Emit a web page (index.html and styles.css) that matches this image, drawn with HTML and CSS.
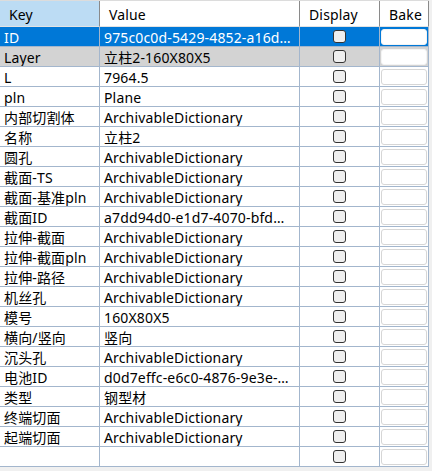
FILE: index.html
```html
<!DOCTYPE html>
<html>
<head>
<meta charset="utf-8">
<link rel="stylesheet" href="styles.css">
</head>
<body>
<div class="grid">
  <div class="row head">
    <div class="cell hkey">Key</div>
    <div class="cell">Value</div>
    <div class="cell">Display</div>
    <div class="cell">Bake</div>
  </div>
  <div class="row sel"><div class="cell">ID</div><div class="cell">975c0c0d-5429-4852-a16d…</div><div class="cell chk"><span class="box"></span></div><div class="cell bake"><span class="tb"></span></div></div>
  <div class="row alt"><div class="cell">Layer</div><div class="cell">立柱2-160X80X5</div><div class="cell chk"><span class="box"></span></div><div class="cell bake"><span class="tb"></span></div></div>
  <div class="row"><div class="cell">L</div><div class="cell">7964.5</div><div class="cell chk"><span class="box"></span></div><div class="cell bake"><span class="tb"></span></div></div>
  <div class="row"><div class="cell">pln</div><div class="cell">Plane</div><div class="cell chk"><span class="box"></span></div><div class="cell bake"><span class="tb"></span></div></div>
  <div class="row"><div class="cell">内部切割体</div><div class="cell">ArchivableDictionary</div><div class="cell chk"><span class="box"></span></div><div class="cell bake"><span class="tb"></span></div></div>
  <div class="row"><div class="cell">名称</div><div class="cell">立柱2</div><div class="cell chk"><span class="box"></span></div><div class="cell bake"><span class="tb"></span></div></div>
  <div class="row"><div class="cell">圆孔</div><div class="cell">ArchivableDictionary</div><div class="cell chk"><span class="box"></span></div><div class="cell bake"><span class="tb"></span></div></div>
  <div class="row"><div class="cell">截面-TS</div><div class="cell">ArchivableDictionary</div><div class="cell chk"><span class="box"></span></div><div class="cell bake"><span class="tb"></span></div></div>
  <div class="row"><div class="cell">截面-基准pln</div><div class="cell">ArchivableDictionary</div><div class="cell chk"><span class="box"></span></div><div class="cell bake"><span class="tb"></span></div></div>
  <div class="row"><div class="cell">截面ID</div><div class="cell">a7dd94d0-e1d7-4070-bfd…</div><div class="cell chk"><span class="box"></span></div><div class="cell bake"><span class="tb"></span></div></div>
  <div class="row"><div class="cell">拉伸-截面</div><div class="cell">ArchivableDictionary</div><div class="cell chk"><span class="box"></span></div><div class="cell bake"><span class="tb"></span></div></div>
  <div class="row"><div class="cell">拉伸-截面pln</div><div class="cell">ArchivableDictionary</div><div class="cell chk"><span class="box"></span></div><div class="cell bake"><span class="tb"></span></div></div>
  <div class="row"><div class="cell">拉伸-路径</div><div class="cell">ArchivableDictionary</div><div class="cell chk"><span class="box"></span></div><div class="cell bake"><span class="tb"></span></div></div>
  <div class="row"><div class="cell">机丝孔</div><div class="cell">ArchivableDictionary</div><div class="cell chk"><span class="box"></span></div><div class="cell bake"><span class="tb"></span></div></div>
  <div class="row"><div class="cell">模号</div><div class="cell">160X80X5</div><div class="cell chk"><span class="box"></span></div><div class="cell bake"><span class="tb"></span></div></div>
  <div class="row"><div class="cell">横向/竖向</div><div class="cell">竖向</div><div class="cell chk"><span class="box"></span></div><div class="cell bake"><span class="tb"></span></div></div>
  <div class="row"><div class="cell">沉头孔</div><div class="cell">ArchivableDictionary</div><div class="cell chk"><span class="box"></span></div><div class="cell bake"><span class="tb"></span></div></div>
  <div class="row"><div class="cell">电池ID</div><div class="cell">d0d7effc-e6c0-4876-9e3e-…</div><div class="cell chk"><span class="box"></span></div><div class="cell bake"><span class="tb"></span></div></div>
  <div class="row"><div class="cell">类型</div><div class="cell">钢型材</div><div class="cell chk"><span class="box"></span></div><div class="cell bake"><span class="tb"></span></div></div>
  <div class="row"><div class="cell">终端切面</div><div class="cell">ArchivableDictionary</div><div class="cell chk"><span class="box"></span></div><div class="cell bake"><span class="tb"></span></div></div>
  <div class="row"><div class="cell">起端切面</div><div class="cell">ArchivableDictionary</div><div class="cell chk"><span class="box"></span></div><div class="cell bake"><span class="tb"></span></div></div>
  <div class="row"><div class="cell"></div><div class="cell"></div><div class="cell chk"><span class="box"></span></div><div class="cell bake"><span class="tb"></span></div></div>
</div>
</body>
</html>
```
FILE: styles.css
```css
* { box-sizing: border-box; }
html, body {
  margin: 0;
  padding: 0;
  background: #f0f0f0;
}
body {
  font-family: "Noto Sans", "Noto Sans CJK SC", sans-serif;
  font-size: 14px;
  letter-spacing: 0.15px;
  color: #000;
}
.grid {
  width: 429px;
  background: #fff;
}
.row {
  display: grid;
  grid-template-columns: 100px 200px 80px 49px;
  height: 20px;
}
.cell {
  border-right: 1px solid #a3b6cd;
  border-bottom: 1px solid #a3b6cd;
  padding: 3px 0 0 4px;
  line-height: 16px;
  white-space: nowrap;
  overflow: hidden;
}
.head {
  height: 27px;
  border-top: 1px solid #dcdcdc;
}
.head .cell {
  border-right-color: #8a8a8a;
  border-bottom-color: #e3e3e3;
  padding: 2px 0 0 9px;
  line-height: 23px;
}
.head .hkey {
  background: #bcdcf4;
}
.sel .cell {
  background: #0078d7;
  color: #fff;
}
.alt .cell {
  background: #d3d3d3;
}
.chk {
  display: flex;
  align-items: center;
  justify-content: center;
  padding: 0;
}
.box {
  width: 13px;
  height: 13px;
  border: 1px solid #333;
  border-radius: 3px;
  background: #efefef;
}
.bake {
  padding: 2px 1px 0 1px;
}
.tb {
  display: block;
  width: 46px;
  height: 16px;
  background: #fff;
  border: 1px solid #d6d6d6;
  border-radius: 3px;
}
.sel .tb, .alt .tb {
  border-color: #f4f4f4;
}
```
